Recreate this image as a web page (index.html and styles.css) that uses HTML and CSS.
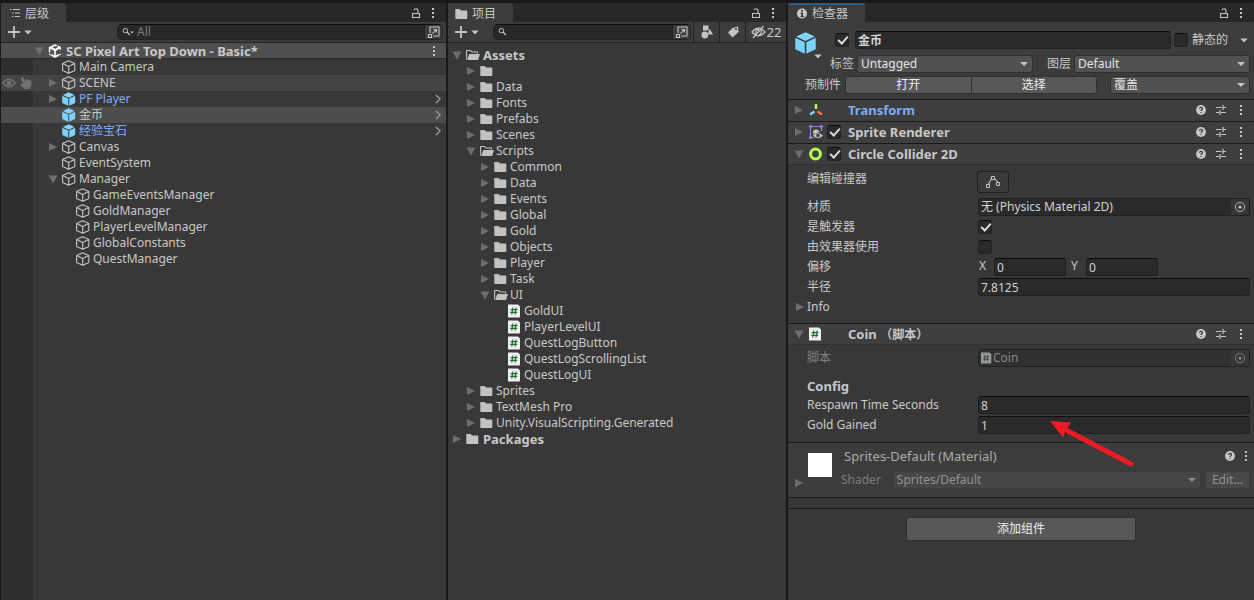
FILE: index.html
```html
<!DOCTYPE html>
<html lang="zh-CN">
<head>
<meta charset="utf-8">
<meta name="viewport" content="width=device-width, initial-scale=1">
<title>SC Pixel Art Top Down - Basic</title>
<link rel="stylesheet" href="styles.css">
</head>
<body>
<svg class="defs" aria-hidden="true">
  <symbol id="cube" viewBox="0.5 0 14 14"><path d="M7.200 .8 13.300 3.600V10.400L7.200 13.300 1.100 10.400V3.600ZM1.100 3.600 7.200 6.500 13.300 3.600M7.200 6.500V13.300" fill="none" stroke="#c4c4c4" stroke-width="1.1" stroke-linejoin="round"/></symbol>
  <symbol id="prefab" viewBox="0.3 0 14 14"><path d="M7 .2 12.9 2.9 7 5.7 1.1 2.9Z" fill="#81d4fa"/><path d="M.5 3.7 6.5 6.5V13.8L.5 11ZM13.5 3.7 7.5 6.5V13.8L13.5 11Z" fill="#7bd3fb"/></symbol>
  <symbol id="folder" viewBox="0.7 0 14 14"><path d="M1 2H5.4L6.6 3.6H12Q13 3.6 13 4.6V11Q13 12 12 12H2Q1 12 1 11Z" fill="#c2c2c2"/></symbol>
  <symbol id="folder-open" viewBox="0 0 14 14"><path d="M.6 11.5V2.5H4.6L5.8 4H11.5V5.5" fill="none" stroke="#c2c2c2" stroke-width="1.1"/><path d="M3.2 6H14L12 12H1.2Z" fill="#c2c2c2"/></symbol>
  <symbol id="script" viewBox="1 0 14 14"><path d="M1 .5H11L13 2.500V13.500H1Z" fill="#eee"/><path d="M5.9 3.5 4.8 10.5M9.1 3.5 8 10.5M3.7 5.6H10.5M3.3 8.4H10.1" stroke="#1f6b2d" stroke-width="1.1"/></symbol>
  <symbol id="right" viewBox="0 0 10 10"><path d="M1 1V9L9 5Z" fill="#6e6e6e"/></symbol>
  <symbol id="down" viewBox="0 0 10 10"><path d="M.5 1.5H9.5L5 9.5Z" fill="#6e6e6e"/></symbol>
  <symbol id="chevron" viewBox="0 0 8 10"><path d="M2 1 6 5 2 9" fill="none" stroke="#9a9a9a" stroke-width="1.4"/></symbol>
  <symbol id="dots" viewBox="0 0 4 12"><path d="M1 1H3V3H1ZM1 5H3V7H1ZM1 9H3V11H1Z" fill="#c4c4c4"/></symbol>
  <symbol id="lock" viewBox="0 0 10 12"><path d="M1.5 6.5H8.5V10.5H1.5ZM7 6.5V3.8Q7 1.7 5 1.7 3.4 1.7 3 3" fill="none" stroke="#c4c4c4" stroke-width="1.1"/></symbol>
  <symbol id="plus" viewBox="0 0 12 12"><path d="M6 0V12M0 6H12" stroke="#c4c4c4" stroke-width="1.8"/></symbol>
  <symbol id="caret" viewBox="0 0 8 5"><path d="M.3.5H7.7L4 4.6Z" fill="#c4c4c4"/></symbol>
  <symbol id="search" viewBox="0 0 12 12"><circle cx="4.4" cy="4.6" r="2.2" fill="none" stroke="#c4c4c4" stroke-width="1"/><path d="M6.1 6.3 8.8 9" stroke="#c4c4c4" stroke-width="1.3"/></symbol>
  <symbol id="popout" viewBox="0 0 14 14"><path d="M3 8V2H12V11H6" fill="none" stroke="#c4c4c4" stroke-width="1.1"/><path d="M1.5 9.5H4.5V12.5H1.5ZM5.5 8.7 9.3 4.9M6.5 4.6H9.5V7.6" fill="none" stroke="#c4c4c4" stroke-width="1.1"/></symbol>
  <symbol id="help" viewBox="0 0 10 10"><circle cx="5" cy="5" r="4.9" fill="#c8c8c8"/><path d="M3.4 3.8Q3.5 2.3 5 2.3 6.6 2.4 6.5 3.7 6.4 4.5 5.6 4.9 5 5.2 5 6" fill="none" stroke="#3c3c3c" stroke-width="1.2"/><path d="M4.4 6.9H5.6V8H4.4Z" fill="#3c3c3c"/></symbol>
  <symbol id="sliders" viewBox="0 0 10 10"><path d="M0 2.500H5.5M7.5 2.500H10M7 0V5M0 7.5H3M5 7.5H10M4 5V10" stroke="#c8c8c8" stroke-width="1.2"/></symbol>
  <symbol id="picker" viewBox="0 0 12 12"><circle cx="6" cy="6" r="4.6" fill="none" stroke="#b4b4b4" stroke-width="1"/><circle cx="6" cy="6" r="1.6" fill="#c4c4c4"/></symbol>
</svg>

<main class="editor">
  <section class="panel" aria-label="层级">
    <header class="tabs">
      <h2 class="tab"><svg class="i14" viewBox="0 0 14 14"><path d="M2 2.500H3.5M5 2.500H12M4 6H5.5M7 6H12M4 9.500H5.5M7 9.500H12" stroke="#c4c4c4" stroke-width="1.2"/></svg>层级</h2>
      <div class="tab-tools"><button aria-label="锁定"><svg class="lock"><use href="#lock"/></svg></button><button aria-label="菜单"><svg class="dots"><use href="#dots"/></svg></button></div>
    </header>
    <div class="toolbar">
      <button class="add" aria-label="创建"><svg class="plus"><use href="#plus"/></svg><svg class="caret"><use href="#caret"/></svg></button>
      <div class="search search-h"><svg class="i12"><use href="#search"/></svg><svg class="tiny-caret"><use href="#caret"/></svg><input type="text" placeholder="All" aria-label="搜索层级"><button class="popout" aria-label="在窗口中打开搜索"><svg class="i14"><use href="#popout"/></svg></button></div>
    </div>
    <div class="hierarchy">
      <div class="scene"><button class="fold" aria-label="折叠"><svg class="i10"><use href="#down"/></svg></button><svg class="i14" viewBox="0 0 14 14"><path d="M7 0 9.6 1.6 8 2.6 7 2 4.8 3.4 7 4.8 9.2 3.4 10.4 1.4 13 3V6L11.6 5.2V4.8L7.9 7V11.2L9.6 10.2 11.3 10.6 12.8 9.6 13.2 10.6 7 14 .8 10.6 1.2 9.6 2.7 10.6 4.4 10.2 6.1 11.2V7L2.4 4.8V7.6L1.4 9 .8 8.4V3L4.4 1.4Z" fill="#f0f0f0"/></svg><span class="scene-name">SC Pixel Art Top Down - Basic*</span><button class="end" aria-label="场景菜单"><svg class="dots"><use href="#dots"/></svg></button></div>
      <ul class="tree">
        <li class="d1"><i class="fold"></i><svg class="i14"><use href="#cube"/></svg><span>Main Camera</span></li>
        <li class="d1 hover"><button class="eye" aria-label="可见性"><svg viewBox="0 0 14 10"><path d="M.8 5Q7-2.6 13.2 5 7 12.600 .8 5Z" fill="none" stroke="#727272" stroke-width="1.2"/><circle cx="7" cy="5" r="2.5" fill="#727272"/></svg></button><button class="hand" aria-label="可选取性"><svg viewBox="0 0 12 12"><path d="M1 .5 2.800 0 5 4.500V2.500L7 2.300 11.500 4V9L9.500 12H4.500L0 7.500 1 6.500 3.300 7.500Z" fill="#727272"/></svg></button><button class="fold" aria-label="展开"><svg class="i10"><use href="#right"/></svg></button><svg class="i14"><use href="#cube"/></svg><span>SCENE</span></li>
        <li class="d1 prefab"><button class="fold" aria-label="展开"><svg class="i10"><use href="#right"/></svg></button><svg class="i14"><use href="#prefab"/></svg><span>PF Player</span><button class="end" aria-label="打开预制件"><svg class="chev"><use href="#chevron"/></svg></button></li>
        <li class="d1 selected"><i class="fold"></i><svg class="i14"><use href="#prefab"/></svg><span>金币</span><button class="end" aria-label="打开预制件"><svg class="chev"><use href="#chevron"/></svg></button></li>
        <li class="d1 prefab"><i class="fold"></i><svg class="i14"><use href="#prefab"/></svg><span>经验宝石</span><button class="end" aria-label="打开预制件"><svg class="chev"><use href="#chevron"/></svg></button></li>
        <li class="d1"><button class="fold" aria-label="展开"><svg class="i10"><use href="#right"/></svg></button><svg class="i14"><use href="#cube"/></svg><span>Canvas</span></li>
        <li class="d1"><i class="fold"></i><svg class="i14"><use href="#cube"/></svg><span>EventSystem</span></li>
        <li class="d1"><button class="fold" aria-label="折叠"><svg class="i10"><use href="#down"/></svg></button><svg class="i14"><use href="#cube"/></svg><span>Manager</span></li>
        <li class="d2"><i class="fold"></i><svg class="i14"><use href="#cube"/></svg><span>GameEventsManager</span></li>
        <li class="d2"><i class="fold"></i><svg class="i14"><use href="#cube"/></svg><span>GoldManager</span></li>
        <li class="d2"><i class="fold"></i><svg class="i14"><use href="#cube"/></svg><span>PlayerLevelManager</span></li>
        <li class="d2"><i class="fold"></i><svg class="i14"><use href="#cube"/></svg><span>GlobalConstants</span></li>
        <li class="d2"><i class="fold"></i><svg class="i14"><use href="#cube"/></svg><span>QuestManager</span></li>
      </ul>
    </div>
  </section>

  <section class="panel" aria-label="项目">
    <header class="tabs">
      <h2 class="tab"><svg class="i14"><use href="#folder"/></svg>项目</h2>
      <div class="tab-tools"><button aria-label="锁定"><svg class="lock"><use href="#lock"/></svg></button><button aria-label="菜单"><svg class="dots"><use href="#dots"/></svg></button></div>
    </header>
    <div class="toolbar">
      <button class="add" aria-label="创建"><svg class="plus"><use href="#plus"/></svg><svg class="caret"><use href="#caret"/></svg></button>
      <div class="search search-p"><svg class="i12"><use href="#search"/></svg><input type="text" aria-label="搜索项目"><button class="popout" aria-label="在窗口中打开搜索"><svg class="i14"><use href="#popout"/></svg></button></div>
      <button class="tool" aria-label="按类型搜索"><svg class="i14" viewBox="0 0 14 14"><path d="M3 .5H8.500V5.500H3ZM9.500 3.500 13 9.500H8Z" fill="#c4c4c4"/><circle cx="4.800" cy="10" r="3.400" fill="#c4c4c4"/></svg></button>
      <button class="tool" aria-label="按标签搜索"><svg class="i14" viewBox="0 0 14 14"><path d="M6.500 3 12 1.500 12.500 7 6.500 12.500 2 7.500Z" fill="#c4c4c4"/><circle cx="10" cy="4" r="1.100" fill="#3c3c3c"/></svg></button>
      <button class="tool hidden-count" aria-label="隐藏包数量 22"><svg viewBox="0 0 15 14"><path d="M1 7Q7.500-.5 14 7 7.500 14.500 1 7ZM2 13 12.500 1" fill="none" stroke="#c4c4c4" stroke-width="1.300"/><path d="M5 9.500Q4 5 8 4.500M8 10Q11 9 10 5" fill="none" stroke="#c4c4c4" stroke-width="1.300"/></svg>22</button>
    </div>
    <ul class="tree project">
      <li class="d0 strong"><button class="fold" aria-label="折叠"><svg class="i10"><use href="#down"/></svg></button><svg class="i14"><use href="#folder-open"/></svg><span>Assets</span></li>
      <li class="d1"><button class="fold" aria-label="展开"><svg class="i10"><use href="#right"/></svg></button><svg class="i14"><use href="#folder"/></svg></li>
      <li class="d1"><button class="fold" aria-label="展开"><svg class="i10"><use href="#right"/></svg></button><svg class="i14"><use href="#folder"/></svg><span>Data</span></li>
      <li class="d1"><button class="fold" aria-label="展开"><svg class="i10"><use href="#right"/></svg></button><svg class="i14"><use href="#folder"/></svg><span>Fonts</span></li>
      <li class="d1"><button class="fold" aria-label="展开"><svg class="i10"><use href="#right"/></svg></button><svg class="i14"><use href="#folder"/></svg><span>Prefabs</span></li>
      <li class="d1"><button class="fold" aria-label="展开"><svg class="i10"><use href="#right"/></svg></button><svg class="i14"><use href="#folder"/></svg><span>Scenes</span></li>
      <li class="d1"><button class="fold" aria-label="折叠"><svg class="i10"><use href="#down"/></svg></button><svg class="i14"><use href="#folder-open"/></svg><span>Scripts</span></li>
      <li class="d2"><button class="fold" aria-label="展开"><svg class="i10"><use href="#right"/></svg></button><svg class="i14"><use href="#folder"/></svg><span>Common</span></li>
      <li class="d2"><button class="fold" aria-label="展开"><svg class="i10"><use href="#right"/></svg></button><svg class="i14"><use href="#folder"/></svg><span>Data</span></li>
      <li class="d2"><button class="fold" aria-label="展开"><svg class="i10"><use href="#right"/></svg></button><svg class="i14"><use href="#folder"/></svg><span>Events</span></li>
      <li class="d2"><button class="fold" aria-label="展开"><svg class="i10"><use href="#right"/></svg></button><svg class="i14"><use href="#folder"/></svg><span>Global</span></li>
      <li class="d2"><button class="fold" aria-label="展开"><svg class="i10"><use href="#right"/></svg></button><svg class="i14"><use href="#folder"/></svg><span>Gold</span></li>
      <li class="d2"><button class="fold" aria-label="展开"><svg class="i10"><use href="#right"/></svg></button><svg class="i14"><use href="#folder"/></svg><span>Objects</span></li>
      <li class="d2"><button class="fold" aria-label="展开"><svg class="i10"><use href="#right"/></svg></button><svg class="i14"><use href="#folder"/></svg><span>Player</span></li>
      <li class="d2"><button class="fold" aria-label="展开"><svg class="i10"><use href="#right"/></svg></button><svg class="i14"><use href="#folder"/></svg><span>Task</span></li>
      <li class="d2"><button class="fold" aria-label="折叠"><svg class="i10"><use href="#down"/></svg></button><svg class="i14"><use href="#folder-open"/></svg><span>UI</span></li>
      <li class="d3"><i class="fold"></i><svg class="i14"><use href="#script"/></svg><span>GoldUI</span></li>
      <li class="d3"><i class="fold"></i><svg class="i14"><use href="#script"/></svg><span>PlayerLevelUI</span></li>
      <li class="d3"><i class="fold"></i><svg class="i14"><use href="#script"/></svg><span>QuestLogButton</span></li>
      <li class="d3"><i class="fold"></i><svg class="i14"><use href="#script"/></svg><span>QuestLogScrollingList</span></li>
      <li class="d3"><i class="fold"></i><svg class="i14"><use href="#script"/></svg><span>QuestLogUI</span></li>
      <li class="d1"><button class="fold" aria-label="展开"><svg class="i10"><use href="#right"/></svg></button><svg class="i14"><use href="#folder"/></svg><span>Sprites</span></li>
      <li class="d1"><button class="fold" aria-label="展开"><svg class="i10"><use href="#right"/></svg></button><svg class="i14"><use href="#folder"/></svg><span>TextMesh Pro</span></li>
      <li class="d1"><button class="fold" aria-label="展开"><svg class="i10"><use href="#right"/></svg></button><svg class="i14"><use href="#folder"/></svg><span>Unity.VisualScripting.Generated</span></li>
      <li class="d0 strong"><button class="fold" aria-label="展开"><svg class="i10"><use href="#right"/></svg></button><svg class="i14"><use href="#folder"/></svg><span>Packages</span></li>
    </ul>
  </section>

  <section class="panel" aria-label="检查器">
    <header class="tabs">
      <h2 class="tab active"><svg class="i14" viewBox="0 0 14 14"><circle cx="7" cy="6.500" r="5" fill="#c8c8c8"/><path d="M6 3H8V4.500H6ZM5.500 5.500H8V9H9V10H5.500V9H6.300V6.500H5.500Z" fill="#333"/></svg>检查器</h2>
      <div class="tab-tools"><button aria-label="锁定"><svg class="lock"><use href="#lock"/></svg></button><button aria-label="菜单"><svg class="dots"><use href="#dots"/></svg></button></div>
    </header>

    <div class="object">
      <button class="object-icon" aria-label="选择图标"><svg class="big-cube"><use href="#prefab"/></svg><svg class="caret"><use href="#caret"/></svg></button>
      <div class="object-fields">
        <div class="line name-line"><input type="checkbox" checked aria-label="启用"><input class="field name" type="text" value="金币" aria-label="名称"><input type="checkbox" id="static"><label for="static">静态的</label><button class="static-menu" aria-label="静态选项"><svg class="caret"><use href="#caret"/></svg></button></div>
        <div class="line tag-line"><label for="tag">标签</label><span class="drop"><select id="tag"><option>Untagged</option></select></span><label class="layer" for="layer">图层</label><span class="drop"><select id="layer"><option>Default</option></select></span></div>
        <div class="line prefab-line"><span>预制件</span><div class="pair"><button class="btn">打开</button><button class="btn">选择</button></div><span class="drop"><select aria-label="覆盖"><option>覆盖</option></select></span></div>
      </div>
    </div>

    <div class="comp"><button class="fold" aria-label="展开"><svg class="i10"><use href="#right"/></svg></button><svg class="i14" viewBox="0 0 14 14"><path d="M7 1V6" stroke="#b2fe59" stroke-width="2.400"/><path d="M5.500 8.500 1 11.500" stroke="#7fd6fd" stroke-width="2.400"/><path d="M8.500 8.500 13 11.500" stroke="#ff6b40" stroke-width="2.400"/></svg><i class="no-check"></i><h3 class="blue">Transform</h3><div class="comp-tools"><button aria-label="帮助"><svg class="i10"><use href="#help"/></svg></button><button aria-label="预设"><svg class="i10"><use href="#sliders"/></svg></button><button aria-label="菜单"><svg class="dots"><use href="#dots"/></svg></button></div></div>
    <div class="comp"><button class="fold" aria-label="展开"><svg class="i10"><use href="#right"/></svg></button><svg class="i14" viewBox="0 0 14 14"><path d="M5 12.500H1.500V1.500H12.500V6" fill="none" stroke="#9d86e8" stroke-width="1.100"/><path d="M.2.200H2.800V2.800H.2ZM11.200.2H13.800V2.800H11.200ZM.2 11.200H2.800V13.800H.2Z" fill="#9d86e8"/><path d="M4 7Q4 4.500 7 4.500 9.500 4.500 10.500 6.800L4.500 9.500Z" fill="#c4c4c4"/><path d="M4 10.500Q9 5.500 14 10.500 9 15.500 4 10.500Z" fill="#c4c4c4"/><circle cx="9" cy="10.500" r="1.800" fill="#3c3c3c"/></svg><input type="checkbox" checked aria-label="启用 Sprite Renderer"><h3>Sprite Renderer</h3><div class="comp-tools"><button aria-label="帮助"><svg class="i10"><use href="#help"/></svg></button><button aria-label="预设"><svg class="i10"><use href="#sliders"/></svg></button><button aria-label="菜单"><svg class="dots"><use href="#dots"/></svg></button></div></div>
    <div class="comp open"><button class="fold" aria-label="折叠"><svg class="i10"><use href="#down"/></svg></button><svg class="i14" viewBox="0 0 14 14"><circle cx="6.500" cy="7" r="4.900" fill="none" stroke="#b2fe59" stroke-width="3"/></svg><input type="checkbox" checked aria-label="启用 Circle Collider 2D"><h3>Circle Collider 2D</h3><div class="comp-tools"><button aria-label="帮助"><svg class="i10"><use href="#help"/></svg></button><button aria-label="预设"><svg class="i10"><use href="#sliders"/></svg></button><button aria-label="菜单"><svg class="dots"><use href="#dots"/></svg></button></div></div>

    <div class="props collider">
      <div class="prop edit"><span>编辑碰撞器</span><button class="edit-btn" aria-label="编辑碰撞器"><svg class="i14" viewBox="0 0 14 14"><path d="M2 10 5.500 3.500M8.500 3.500 12 7.500" stroke="#c4c4c4" stroke-width="1.100"/><path d="M.5 9.500H3.500V12.500H.5ZM5.500 1.500H8.500V4.500H5.500ZM10.500 7.500H13.500V10.500H10.500Z" fill="none" stroke="#c4c4c4"/></svg></button></div>
      <div class="prop"><span>材质</span><div class="field ref">无 (Physics Material 2D)<button class="pick" aria-label="选择材质"><svg class="i12"><use href="#picker"/></svg></button></div></div>
      <div class="prop"><label for="trigger">是触发器</label><input type="checkbox" id="trigger" checked></div>
      <div class="prop"><label for="effector">由效果器使用</label><input type="checkbox" id="effector"></div>
      <div class="prop"><span>偏移</span><div class="vector"><label for="ox">X</label><input class="field" id="ox" type="text" value="0"><label for="oy">Y</label><input class="field" id="oy" type="text" value="0"></div></div>
      <div class="prop"><label for="radius">半径</label><input class="field" id="radius" type="text" value="7.8125"></div>
      <div class="info"><button class="fold" aria-label="展开 Info"><svg class="i10"><use href="#right"/></svg></button>Info</div>
    </div>

    <div class="comp open"><button class="fold" aria-label="折叠"><svg class="i10"><use href="#down"/></svg></button><svg class="i14"><use href="#script"/></svg><i class="no-check"></i><h3>Coin <span class="zh">（脚本）</span></h3><div class="comp-tools"><button aria-label="帮助"><svg class="i10"><use href="#help"/></svg></button><button aria-label="预设"><svg class="i10"><use href="#sliders"/></svg></button><button aria-label="菜单"><svg class="dots"><use href="#dots"/></svg></button></div></div>
    <div class="props coin">
      <div class="prop disabled"><span>脚本</span><div class="field ref"><svg class="i12"><use href="#script"/></svg>Coin<button class="pick" disabled aria-label="选择脚本"><svg class="i12"><use href="#picker"/></svg></button></div></div>
      <h4>Config</h4>
      <div class="prop"><label for="respawn">Respawn Time Seconds</label><input class="field" id="respawn" type="text" value="8"></div>
      <div class="prop gold"><label for="gold">Gold Gained</label><input class="field" id="gold" type="text" value="1"><svg class="pointer" viewBox="0 0 86 48" aria-hidden="true"><path d="M81 43 14 8" stroke="#ed1c24" stroke-width="5" stroke-linecap="round"/><path d="M0 0 21.500 1.500 17 7 13 16.500Z" fill="#ed1c24"/></svg></div>
    </div>

    <div class="material">
      <button class="fold" aria-label="展开材质"><svg class="i10"><use href="#right"/></svg></button>
      <div class="swatch"></div>
      <div class="material-fields">
        <div class="material-title"><h3>Sprites-Default (Material)</h3><button aria-label="帮助"><svg class="i10"><use href="#help"/></svg></button><button aria-label="菜单"><svg class="dots"><use href="#dots"/></svg></button></div>
        <div class="shader"><label for="shader">Shader</label><span class="drop"><select id="shader" disabled><option>Sprites/Default</option></select></span><button class="btn" disabled>Edit...</button></div>
      </div>
    </div>
    <div class="footer"><button class="btn add-comp">添加组件</button></div>
  </section>
</main>
</body>
</html>
```

FILE: styles.css
```css
* { box-sizing: border-box; }

body {
  margin: 0;
  background: #191919;
  color: #c8c8c8;
  font-family: "Noto Sans", "Noto Sans CJK SC", sans-serif;
  font-size: 12px;
  line-height: 16px;
}

h2, h3, h4, ul { margin: 0; padding: 0; }
h2 { font-size: 12px; font-weight: 400; }
h3, h4 { font-size: 13px; }
svg { display: block; flex: none; }
button, input, select { font: inherit; color: inherit; margin: 0; }
button {
  display: flex;
  align-items: center;
  justify-content: center;
  flex: none;
  padding: 0;
  border: 0;
  background: none;
}

.defs { position: absolute; width: 0; height: 0; }
.zh { font-size: 12px; }
.i10 { width: 10px; height: 10px; }
.i12 { width: 12px; height: 12px; }
.i14 { width: 14px; height: 14px; }
.lock { width: 10px; height: 12px; }
.dots { width: 4px; height: 12px; }
.chev { width: 8px; height: 10px; }
.plus { width: 12px; height: 12px; }
.caret { width: 8px; height: 5px; }
.tiny-caret { width: 4px; height: 3px; margin-left: -3px; }
.fold { width: 10px; flex: none; }

.editor {
  display: grid;
  grid-template-columns: 445fr 338fr 466fr;
  gap: 2px;
  min-height: 100vh;
  padding: 3px 0 0 1px;
}
.panel {
  display: flex;
  flex-direction: column;
  min-width: 0;
  background: #383838;
}

/* Tabs and toolbars */
.tabs {
  display: flex;
  justify-content: space-between;
  height: 19px;
  background: #282828;
  border-radius: 3px 3px 0 0;
}
.tab {
  display: flex;
  align-items: center;
  gap: 3px;
  padding: 3px 17px 0 7px;
  background: #3c3c3c;
  border-radius: 3px 3px 0 0;
}
.tab.active { border-top: 2px solid #2c5d87; padding-top: 1px; }
.tab-tools { display: flex; gap: 10px; padding-right: 11px; }
.toolbar {
  display: flex;
  align-items: center;
  height: 21px;
  padding-left: 7px;
  background: #3c3c3c;
  border-bottom: 1px solid #232323;
}
.add { gap: 4px; }
.search {
  display: flex;
  align-items: center;
  flex: 1;
  min-width: 0;
  height: 16px;
  padding-left: 3px;
  background: #282828;
  border: 1px solid #212121;
  border-top-color: #0d0d0d;
  border-radius: 5px;
}
.search-h { margin: 0 3px 0 85px; }
.search-p { margin: 0 2px 0 14px; }
.search input {
  flex: 1;
  min-width: 0;
  height: 14px;
  padding: 0 0 0 3px;
  border: 0;
  background: none;
}
.search input::placeholder { color: #7a7a7a; opacity: 1; }
.popout {
  width: 18px;
  height: 14px;
  background: #3c3c3c;
  border-left: 1px solid #232323;
  border-radius: 0 4px 4px 0;
}
.tool {
  width: 26px;
  height: 20px;
  border-left: 1px solid #232323;
}
.tool.hidden-count { width: 41px; gap: 1px; font-size: 13px; }
.hidden-count svg { width: 15px; height: 14px; }

/* Trees */
.hierarchy {
  flex: 1;
  background: linear-gradient(90deg, #2e2e2e 32px, #383838 32px);
}
.scene {
  display: flex;
  align-items: center;
  height: 16px;
  padding-left: 33px;
  background: #4f4f4f;
  border-bottom: 1px solid #2c2c2c;
  font-size: 13px;
  font-weight: 700;
}
.scene .i14 { margin-left: 4px; }
.scene-name { margin-left: 4px; }
.end { width: 16px; height: 16px; margin-left: auto; }
.scene .end { margin-right: 4px; }
.tree { list-style: none; }
.tree li {
  position: relative;
  display: flex;
  align-items: center;
  height: 16px;
  white-space: nowrap;
}
.tree li > .i14 { margin: 0 3px 0 4px; }
.project { padding: 4px 0 0 4px; }
.project li:not(.strong) > .i14 { margin-right: 2px; }
.d1 { padding-left: 14px; }
.d2 { padding-left: 28px; }
.d3 { padding-left: 42px; }
.hierarchy .d1 { padding-left: 47px; }
.hierarchy .d2 { padding-left: 61px; }
.tree .hover { background: #444444; }
.tree .selected { background: #4d4d4d; }
.prefab > span { color: #7fabf3; }
.strong { font-size: 13px; font-weight: 700; }
.eye, .hand { position: absolute; top: 2px; height: 12px; }
.eye { left: 1px; width: 14px; }
.hand { left: 19px; width: 12px; }
.eye svg { width: 14px; height: 10px; }
.hand svg { width: 12px; height: 12px; }

/* Inspector controls */
input[type="checkbox"] {
  appearance: none;
  flex: none;
  width: 14px;
  height: 14px;
  background: #2a2a2a;
  border: 1px solid #212121;
  border-top-color: #0d0d0d;
  border-radius: 3px;
}
input[type="checkbox"]:checked::before {
  content: "";
  display: block;
  width: 4px;
  height: 8px;
  margin: 0 0 0 4px;
  border: solid #dcdcdc;
  border-width: 0 2px 2px 0;
  transform: rotate(42deg);
}
.field {
  width: 100%;
  min-width: 0;
  height: 18px;
  padding: 0 2px;
  background: #2a2a2a;
  border: 1px solid #212121;
  border-top-color: #0d0d0d;
  border-radius: 3px;
  color: #d2d2d2;
}
.drop { position: relative; display: flex; min-width: 0; }
.drop::after {
  content: "";
  position: absolute;
  right: 5px;
  top: 7px;
  border: 4px solid transparent;
  border-top-color: #c4c4c4;
  border-bottom: 0;
  pointer-events: none;
}
.drop select {
  appearance: none;
  width: 100%;
  height: 18px;
  padding: 0 14px 0 3px;
  background: #515151;
  border: 1px solid #303030;
  border-radius: 3px;
  color: #e4e4e4;
}
.btn {
  height: 18px;
  background: #585858;
  border: 1px solid #303030;
  border-radius: 3px;
  color: #eeeeee;
}

.object {
  display: flex;
  padding: 9px 4px 5px 7px;
  background: #3c3c3c;
}
.object-icon {
  flex-direction: column;
  align-items: flex-end;
  align-self: flex-start;
  width: 27px;
  padding-top: 1px;
}
.big-cube { width: 22px; height: 22px; margin-right: 5px; }
.object-fields { flex: 1; min-width: 0; }
.line { display: flex; align-items: center; }
.name-line { height: 18px; padding-left: 13px; }
.name { flex: 1; margin: 0 3px 0 6px; font-weight: 700; }
.name-line label { margin-left: 4px; }
.static-menu { margin: 0 2px 0 12px; }
.tag-line { margin-top: 6px; padding-left: 8px; gap: 3px; }
.tag-line .drop { flex: 1; }
.layer { margin-left: 11px; }
.prefab-line { margin-top: 3px; margin-left: -17px; gap: 4px; }
.pair { display: flex; flex: 252; }
.pair .btn { flex: 1; }
.pair .btn:first-child { border-radius: 3px 0 0 3px; border-right: 0; }
.pair .btn:last-child { border-radius: 0 3px 3px 0; }
.prefab-line .drop { flex: 140; margin-left: 9px; }

.comp {
  display: flex;
  align-items: center;
  height: 22px;
  padding: 0 11px 0 6px;
  background: #3e3e3e;
  border: solid #1a1a1a;
  border-width: 1px 0 0;
  padding-bottom: 1px;
}
.comp.open { border-bottom: 1px solid #303030; padding-bottom: 0; }
.comp > .i14 { margin: 0 4px 0 5px; }
.no-check { width: 14px; }
.comp h3 { margin-left: 7px; }
.blue { color: #7fabf3; }
.comp-tools { display: flex; gap: 10px; margin-left: auto; }
.comp-tools .dots { margin: 0 0 0 3px; }

.props { padding: 4px 4px 0 19px; }
.prop {
  display: grid;
  grid-template-columns: 171px minmax(0, 1fr);
  align-items: center;
  height: 18px;
  margin-bottom: 2px;
}
.prop.edit { height: 24px; align-items: start; margin-bottom: 5px; }
.edit > span { margin-top: 2px; }
.edit-btn {
  width: 32px;
  height: 22px;
  margin: 2px 0 0 -1px;
  background: #3a3a3a;
  border: 1px solid #1e1e1e;
  border-radius: 3px;
}
.ref {
  display: flex;
  align-items: center;
  padding-right: 0;
  border-top-color: #212121;
}
.pick {
  width: 18px;
  height: 16px;
  margin-left: auto;
  background: #373737;
  border-radius: 0 3px 3px 0;
}
.vector {
  display: grid;
  grid-template-columns: 12px 72px 12px 72px;
  column-gap: 4px;
}
.vector label { padding-left: 1px; }
.info { display: flex; align-items: center; gap: 2px; margin: 3px 0 8px -12px; }
.coin { padding-bottom: 6px; }
.disabled > span { opacity: .5; }
.disabled .field { background: #313131; color: #878787; }
.disabled .ref svg { opacity: .55; }
.coin h4 { margin: 11px 0 2px; }
.gold { position: relative; }
.pointer { position: absolute; left: 243px; top: 5px; width: 86px; height: 48px; z-index: 1; }

.material {
  display: flex;
  padding: 4px 4px 8px 6px;
  background: #3c3c3c;
  border: solid #1a1a1a;
  border-width: 1px 0;
}
.material > .fold { align-self: flex-end; margin-bottom: 1px; }
.swatch { width: 24px; height: 24px; margin: 6px 9px 0 4px; background: #fff; flex: none; }
.material-fields { flex: 1; min-width: 0; }
.material-title { display: flex; align-items: center; height: 18px; padding: 0 2px 0 3px; }
.material-title h3 { font-weight: 400; color: #aaaaaa; margin-right: auto; }
.material-title .dots { margin-left: 9px; }
.shader { display: flex; align-items: center; margin-top: 6px; color: #7c7c7c; }
.shader .drop { flex: 1; margin: 0 4px 0 12px; }
.shader select { background: #464646; color: #929292; border-color: #393939; opacity: 1; }
.shader .drop::after { border-top-color: #8c8c8c; }
.shader .btn { width: 45px; background: #494949; color: #929292; border-color: #393939; }
.footer {
  display: flex;
  justify-content: center;
  margin-top: 10px;
  padding-top: 8px;
  border-top: 1px solid #1a1a1a;
}
.add-comp { width: 230px; height: 24px; }
```
